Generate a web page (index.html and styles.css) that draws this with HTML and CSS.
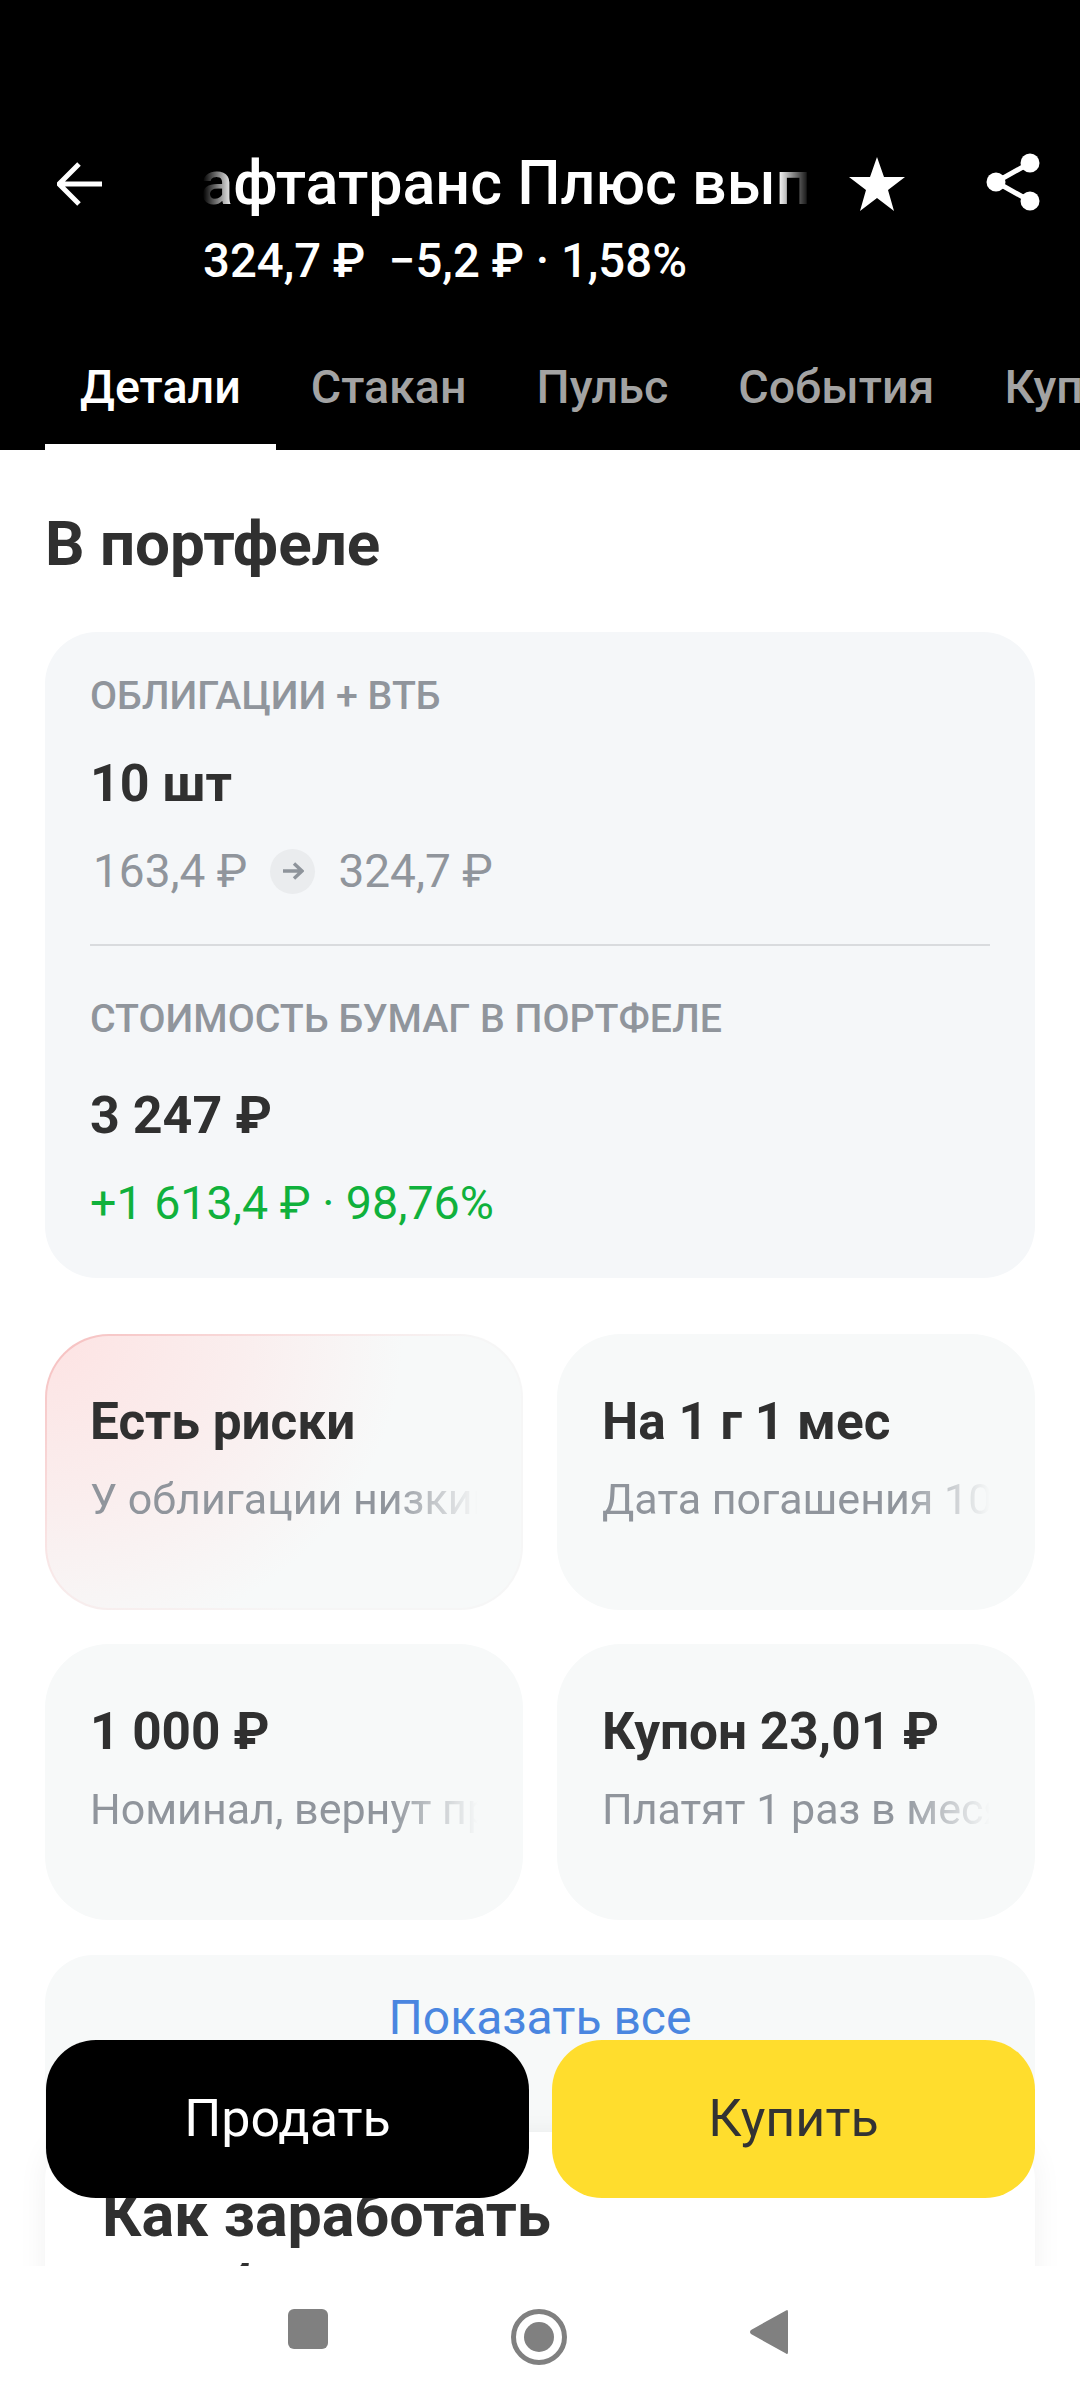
FILE: index.html
```html
<!DOCTYPE html>
<html lang="ru">

<head>
    <meta charset="UTF-8">
    <meta name="viewport" content="width=device-width, initial-scale=1.0">
    <title>Нафтатранс Плюс</title>
    <link rel="stylesheet" href="styles.css">
</head>

<body>
    <div class="screen">
        <header class="topBar">
            <div class="titleRow">
                <svg class="backIcon" viewBox="0 0 46 44" width="46" height="44">
                    <path d="M2 22H45M22 2L2 22L22 42" fill="none" stroke="#fff" stroke-width="5" stroke-linejoin="miter"/>
                </svg>
                <div class="titleBox">
                    <div class="titleMask"><span class="titleText">Нафтатранс Плюс выпуск 1</span></div>
                    <div class="priceLine">324,7 ₽&nbsp; −5,2 ₽ · 1,58%</div>
                </div>
                <svg class="starIcon" viewBox="0 0 58 54" width="58" height="54">
                    <path d="M29 0L36 20H57L40 33L46 54L29 41L12 54L18 33L1 20H22Z" fill="#fff"/>
                </svg>
                <svg class="shareIcon" viewBox="0 0 54 58" width="54" height="58">
                    <path d="M44 10L10 29L44 48" fill="none" stroke="#fff" stroke-width="5"/>
                    <circle cx="44" cy="10" r="9.5" fill="#fff"/>
                    <circle cx="10" cy="29" r="9.5" fill="#fff"/>
                    <circle cx="44" cy="48" r="9.5" fill="#fff"/>
                </svg>
            </div>
            <ul class="tabs">
                <li class="tab active">Детали</li>
                <li class="tab">Стакан</li>
                <li class="tab">Пульс</li>
                <li class="tab">События</li>
                <li class="tab">Купоны</li>
            </ul>
        </header>

        <main class="content">
            <h2 class="sectionTitle">В портфеле</h2>

            <section class="portfolio">
                <div class="smallLabel">ОБЛИГАЦИИ + ВТБ</div>
                <div class="bigValue">10 шт</div>
                <div class="priceChange">
                    <span>163,4 ₽</span>
                    <span class="arrowDot">
                        <svg viewBox="0 0 22 20" width="22" height="20">
                            <path d="M1 10H20M12 2.5L20 10L12 17.5" fill="none" stroke="#8e949b" stroke-width="3.4"/>
                        </svg>
                    </span>
                    <span>324,7 ₽</span>
                </div>
                <div class="divider"></div>
                <div class="smallLabel">СТОИМОСТЬ БУМАГ В ПОРТФЕЛЕ</div>
                <div class="bigValue second">3 247 ₽</div>
                <div class="profit">+1 613,4 ₽ · 98,76%</div>
            </section>

            <section class="facts">
                <div class="fact risk">
                    <div class="factTitle">Есть риски</div>
                    <div class="factText">У облигации низкий рейтинг</div>
                </div>
                <div class="fact">
                    <div class="factTitle">На 1 г 1 мес</div>
                    <div class="factText">Дата погашения 10.05.2025</div>
                </div>
                <div class="fact">
                    <div class="factTitle">1 000 ₽</div>
                    <div class="factText">Номинал, вернут при погашении</div>
                </div>
                <div class="fact">
                    <div class="factTitle">Купон 23,01 ₽</div>
                    <div class="factText">Платят 1 раз в месяц</div>
                </div>
            </section>

            <div class="showAll">Показать все</div>

            <section class="howTo">
                <h2 class="howToTitle">Как заработать<br>на облигациях</h2>
            </section>
        </main>

        <div class="actions">
            <div class="btn sell">Продать</div>
            <div class="btn buy">Купить</div>
        </div>

        <nav class="navBar">
            <svg viewBox="0 0 40 40" width="40" height="40">
                <rect width="40" height="40" rx="6" fill="#808080"/>
            </svg>
            <svg viewBox="0 0 56 56" width="56" height="56">
                <circle cx="28" cy="28" r="25.5" fill="none" stroke="#808080" stroke-width="5"/>
                <circle cx="28" cy="28" r="15" fill="#808080"/>
            </svg>
            <svg viewBox="0 0 38 46" width="38" height="46">
                <path d="M36 1.5Q38 0 38 3V43Q38 46 36 44.5L1 25Q-1 23 1 21Z" fill="#808080"/>
            </svg>
        </nav>
    </div>
</body>

</html>
```

FILE: styles.css
```css
* {
    padding: 0;
    margin: 0;
    list-style: none;
    box-sizing: border-box;
}

body {
    width: 1080px;
    height: 2400px;
    overflow: hidden;
    background-color: #fff;
    font-family: Roboto, "Noto Sans", sans-serif;
    color: #303030;
}

.screen {
    position: relative;
    width: 1080px;
    height: 2400px;
    overflow: hidden;
}

/* шапка */
.topBar {
    height: 450px;
    padding-top: 147px;
    background-color: #000;
    color: #fff;
}

.titleRow {
    display: flex;
    align-items: flex-start;
    height: 136px;
}

.backIcon {
    margin: 15px 0 0 57px;
    flex-shrink: 0;
}

.titleBox {
    width: 607px;
    margin-left: 100px;
    flex-shrink: 0;
}

.titleMask {
    width: 607px;
    height: 72px;
    overflow: hidden;
    white-space: nowrap;
    font-size: 61px;
    line-height: 72px;
    font-weight: 500;
    -webkit-mask-image: linear-gradient(to right, transparent, #000 30px, #000 575px, transparent);
    mask-image: linear-gradient(to right, transparent, #000 30px, #000 575px, transparent);
}

.titleText {
    display: inline-block;
    margin-left: -46px;
}

.priceLine {
    margin-top: 15px;
    font-size: 47.3px;
    line-height: 54px;
    font-weight: 500;
    white-space: nowrap;
}

.starIcon {
    margin: 10px 0 0 38px;
    flex-shrink: 0;
}

.shareIcon {
    margin: 6px 0 0 80px;
    flex-shrink: 0;
}

.tabs {
    display: flex;
    margin-top: 48px;
    padding-left: 45px;
    white-space: nowrap;
}

.tab {
    height: 119px;
    padding: 28px 35px 0;
    font-size: 46.6px;
    line-height: 56px;
    font-weight: 500;
    color: #a3a3a3;
}

.tab.active {
    color: #fff;
    border-bottom: 6px solid #fff;
}

/* контент */
.content {
    padding: 0 45px;
}

.sectionTitle {
    margin-top: 58px;
    font-size: 62px;
    line-height: 72px;
    font-weight: 700;
}

.portfolio {
    height: 646px;
    margin-top: 52px;
    padding: 42px 45px 0;
    border-radius: 52px;
    background-color: #f5f7f9;
}

.smallLabel {
    font-size: 39.3px;
    line-height: 44px;
    font-weight: 500;
    color: #90959c;
}

.bigValue {
    margin-top: 36px;
    font-size: 52px;
    line-height: 60px;
    font-weight: 700;
}

.bigValue.second {
    margin-top: 45px;
}

.priceChange {
    display: flex;
    align-items: center;
    gap: 23px;
    margin-top: 28px;
    padding-left: 3px;
    font-size: 46px;
    line-height: 58px;
    color: #90959c;
}

.arrowDot {
    display: flex;
    align-items: center;
    justify-content: center;
    width: 45px;
    height: 45px;
    border-radius: 50%;
    background-color: #eaecee;
}

.divider {
    height: 2px;
    margin: 44px 0 51px;
    background-color: #d9dbde;
}

.profit {
    margin-top: 28px;
    font-size: 46.6px;
    line-height: 58px;
    color: #10b13c;
}

.facts {
    display: grid;
    grid-template-columns: 478px 478px;
    grid-auto-rows: 276px;
    gap: 34px;
    margin-top: 56px;
}

.fact {
    padding: 58px 45px 0;
    border-radius: 64px;
    background-color: #f7f9f9;
    overflow: hidden;
}

.fact.risk {
    border: 2px solid transparent;
    padding: 56px 43px 0;
    background-image: radial-gradient(ellipse 75% 115% at 0 0, #fde3e3 0, #faeeee 55%, #f7f9f9 100%), radial-gradient(ellipse 90% 120% at 0 0, #f6bfbf 0, #f9e2e2 60%, #f6f6f6 100%);
    background-origin: border-box;
    background-clip: padding-box, border-box;
}

.factTitle {
    font-size: 51.3px;
    line-height: 60px;
    font-weight: 700;
    white-space: nowrap;
}

.factText {
    width: 388px;
    margin-top: 22px;
    overflow: hidden;
    white-space: nowrap;
    font-size: 43px;
    line-height: 50px;
    color: #90959c;
    -webkit-mask-image: linear-gradient(to right, #000 300px, transparent);
    mask-image: linear-gradient(to right, #000 300px, transparent);
}

.showAll {
    height: 240px;
    margin-top: 35px;
    padding-top: 35px;
    border-radius: 48px;
    background-color: #f7f9f9;
    text-align: center;
    font-size: 48px;
    line-height: 56px;
    color: #4a86e0;
}

.howTo {
    height: 300px;
    margin-top: -63px;
    padding: 46px 57px 0;
    border-radius: 48px;
    background-color: #fff;
    box-shadow: 0 0 30px rgba(0, 0, 0, 0.06);
    position: relative;
}

.howToTitle {
    font-size: 61px;
    line-height: 74px;
    font-weight: 700;
}

/* кнопки поверх контента */
.actions {
    position: absolute;
    left: 46px;
    top: 2040px;
    display: flex;
    gap: 23px;
}

.btn {
    width: 483px;
    height: 158px;
    border-radius: 50px;
    font-size: 52px;
    line-height: 158px;
    text-align: center;
}

.sell {
    background-color: #000;
    color: #fff;
}

.buy {
    background-color: #ffdd2d;
    color: #333;
}

.navBar {
    position: absolute;
    left: 0;
    top: 2266px;
    width: 1080px;
    height: 134px;
    background-color: #fff;
    display: flex;
    align-items: flex-start;
    padding: 43px 0 0 288px;
    gap: 183px;
}
```
